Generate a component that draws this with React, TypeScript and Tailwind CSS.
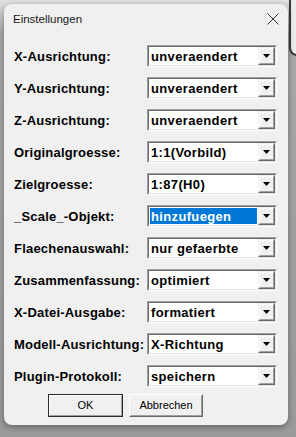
import React from "react";

const rows: [string, string, boolean?][] = [
  ["X-Ausrichtung:", "unveraendert"],
  ["Y-Ausrichtung:", "unveraendert"],
  ["Z-Ausrichtung:", "unveraendert"],
  ["Originalgroesse:", "1:1(Vorbild)"],
  ["Zielgroesse:", "1:87(H0)"],
  ["_Scale_-Objekt:", "hinzufuegen", true],
  ["Flaechenauswahl:", "nur gefaerbte"],
  ["Zusammenfassung:", "optimiert"],
  ["X-Datei-Ausgabe:", "formatiert"],
  ["Modell-Ausrichtung:", "X-Richtung"],
  ["Plugin-Protokoll:", "speichern"],
];

const boldFont = { fontFamily: '"Liberation Sans", Arial, sans-serif' };

function Combo({ value, selected }: { value: string; selected?: boolean }) {
  return (
    <div className="flex w-[130px] h-[22px] border border-t-[#a0a0a0] border-l-[#a0a0a0] border-r-[#ffffff] border-b-[#ffffff]">
      <div className="flex flex-1 border border-t-[#696969] border-l-[#696969] border-r-[#e3e3e3] border-b-[#e3e3e3] bg-white">
        <div className="flex flex-1 p-px">
          <div
            className={
              selected
                ? "flex flex-1 items-center pl-[1px] bg-[#0078d7] text-white"
                : "flex flex-1 items-center pl-[1px] text-black"
            }
          >
            <span className="text-[13px] font-bold tracking-[0.35px] leading-none" style={boldFont}>
              {value}
            </span>
          </div>
        </div>
        <div className="flex w-[17px] items-center justify-center bg-[#f0f0f0] border border-t-[#f0f0f0] border-l-[#f0f0f0] border-r-[#696969] border-b-[#696969]">
          <div className="flex flex-1 self-stretch items-center justify-center border border-t-[#ffffff] border-l-[#ffffff] border-r-[#a0a0a0] border-b-[#a0a0a0]">
            <svg width="7" height="4" viewBox="0 0 7 4">
              <path d="M0 0h7L3.5 4z" fill="#000" />
            </svg>
          </div>
        </div>
      </div>
    </div>
  );
}

export default function App() {
  return (
    <div className="relative w-[296px] h-[437px] overflow-hidden bg-linear-to-b from-[#e2e2e2] via-[#a8a8a8] via-[8%] to-[#9a9a9a] pt-[4px] pl-[4px]">
      <div className="absolute left-[289px] top-[-10px] w-[20px] h-[66px] border-l-2 border-b-2 border-[#3a3a3a] rounded-bl-[8px] bg-[#ececec]" />
      <div className="relative flex flex-col w-[284px] h-[421px] rounded-[8px] bg-[#f0f0f0] shadow-[0_2px_6px_rgba(0,0,0,0.35)]">
        <div className="flex h-[41px] items-start justify-between pt-[8px] pl-[9px] pr-[9px]">
          <span className="text-[11.5px] text-[#1a1a1a] leading-[14px]" style={{ fontFamily: '"Liberation Sans", Arial, sans-serif' }}>
            Einstellungen
          </span>
          <svg width="12" height="12" viewBox="0 0 12 12" className="mt-[1px]">
            <path d="M0.5 0.5L11.5 11.5M11.5 0.5L0.5 11.5" stroke="#333" strokeWidth="1" />
          </svg>
        </div>
        <div className="flex flex-col gap-[10px] pl-[10px]">
          {rows.map(([label, value, sel]) => (
            <div key={label} className="flex items-center h-[22px]">
              <div
                className="w-[133px] text-[13px] font-bold tracking-[0.2px] text-black leading-none"
                style={boldFont}
              >
                {label}
              </div>
              <Combo value={value} selected={sel} />
            </div>
          ))}
        </div>
        <div className="flex gap-[6px] pl-[44px] mt-[7px]">
          <div className="flex w-[75px] h-[23px] border border-[#2b2b2b]">
            <div className="flex flex-1 items-center justify-center border border-t-white border-l-white border-r-[#a0a0a0] border-b-[#a0a0a0]">
              <span className="text-[11px] text-black" style={{ fontFamily: '"Liberation Sans", Arial, sans-serif' }}>OK</span>
            </div>
          </div>
          <div className="flex w-[74px] h-[23px] border border-t-white border-l-white border-r-[#696969] border-b-[#696969]">
            <div className="flex flex-1 items-center justify-center border border-t-[#f0f0f0] border-l-[#f0f0f0] border-r-[#a0a0a0] border-b-[#a0a0a0]">
              <span className="text-[11px] text-black" style={{ fontFamily: '"Liberation Sans", Arial, sans-serif' }}>Abbrechen</span>
            </div>
          </div>
        </div>
      </div>
    </div>
  );
}
